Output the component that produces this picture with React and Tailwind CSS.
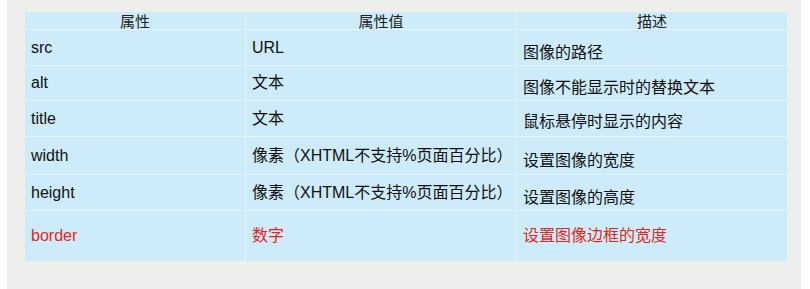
import React from "react";

const rows = [
  { a: "src", b: "URL", c: "图像的路径", h: "h-[35px]", red: false },
  { a: "alt", b: "文本", c: "图像不能显示时的替换文本", h: "h-[34px]", red: false },
  { a: "title", b: "文本", c: "鼠标悬停时显示的内容", h: "h-[35px]", red: false, small: true },
  { a: "width", b: "像素（XHTML不支持%页面百分比）", c: "设置图像的宽度", h: "h-[37px]", red: false },
  { a: "height", b: "像素（XHTML不支持%页面百分比）", c: "设置图像的高度", h: "h-[35px]", red: false },
  { a: "border", b: "数字", c: "设置图像边框的宽度", h: "h-[50px]", red: true },
];

export default function App() {
  return (
    <div className="w-[810px] h-[289px] bg-white flex" style={{ fontFamily: '"Liberation Sans", "Noto Sans CJK SC", sans-serif' }}>
      <div className="ml-[7px] w-[794px] h-[289px] bg-[#eeeeec] pt-[12px] pl-[18px]">
        <div className="w-[762px] grid grid-cols-[220px_270px_270px] gap-px bg-[#e4f4fb]">
          <div className="h-[17px] bg-[#cdebf8] flex items-center justify-center pt-[2px] text-[15px] leading-none text-[#222]">属性</div>
          <div className="h-[17px] bg-[#cdebf8] flex items-center justify-center pt-[2px] text-[15px] leading-none text-[#222]">属性值</div>
          <div className="h-[17px] bg-[#cdebf8] flex items-center justify-center pt-[2px] text-[15px] leading-none text-[#222]">描述</div>
          {rows.map((r) => {
            const color = r.red ? "text-[#e0281c]" : "text-[#111]";
            return (
              <React.Fragment key={r.a}>
                <div className={`${r.h} bg-[#cdebf8] flex items-center pl-[6px] text-[16px] leading-none ${color}`}>{r.a}</div>
                <div className={`${r.h} bg-[#cdebf8] flex items-center pl-[6px] text-[16px] leading-none ${color}`}>{r.b}</div>
                <div className={`${r.h} bg-[#cdebf8] flex items-center pl-[6px] text-[16px] leading-none ${color} ${r.red ? "" : r.small ? "pt-[6px]" : "pt-[10px]"}`}>{r.c}</div>
              </React.Fragment>
            );
          })}
        </div>
      </div>
    </div>
  );
}
